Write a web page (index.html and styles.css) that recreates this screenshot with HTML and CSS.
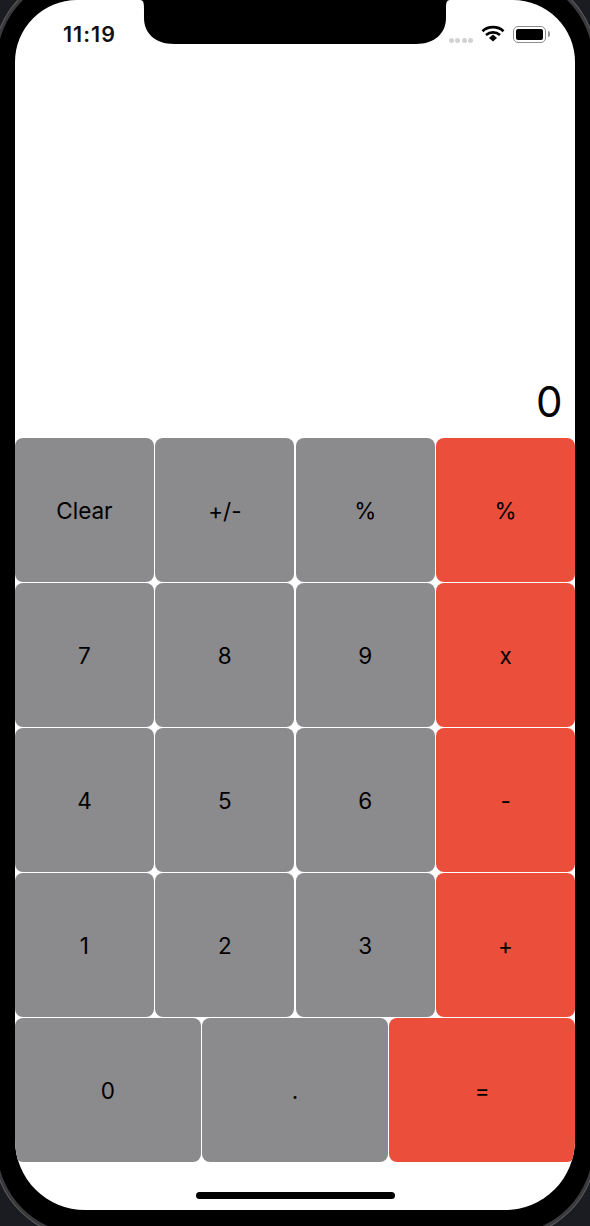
FILE: index.html
```html
<!DOCTYPE html>
<html lang="en">
<head>
<meta charset="utf-8">
<title>Calculator</title>
<link rel="stylesheet" href="styles.css">
</head>
<body>
<div class="device">
<main class="screen">
  <svg class="notch" width="310" height="45" viewBox="0 0 310 45"><path d="M0 0H310C306 0 306 4 306 10V18C306 33 295 44 276 44H34C15 44 4 33 4 18V10C4 4 4 0 0 0Z" fill="#000"/></svg>
  <header class="status">
    <span class="time">11:19</span>
    <div class="status-icons">
      <span class="signal"><i></i><i></i><i></i><i></i></span>
      <svg class="wifi" width="24" height="17" viewBox="0 0 24 17"><path d="M1.5 6.2C7 .8 17 .8 22.5 6.2" fill="none" stroke="#000" stroke-width="2.6"/><path d="M5 10C9 6.5 15 6.5 19 10" fill="none" stroke="#000" stroke-width="2.6"/><path d="M8 13L12 9.6 16 13 12 16.6Z" fill="#000"/></svg>
      <span class="battery"><span class="battery-fill"></span></span>
    </div>
  </header>
  <div class="display">0</div>
  <section class="keypad">
    <div class="row">
      <button class="key">Clear</button><button class="key">+/-</button><button class="key">%</button><button class="key op">%</button>
    </div>
    <div class="row">
      <button class="key">7</button><button class="key">8</button><button class="key">9</button><button class="key op">x</button>
    </div>
    <div class="row">
      <button class="key">4</button><button class="key">5</button><button class="key">6</button><button class="key op">-</button>
    </div>
    <div class="row">
      <button class="key">1</button><button class="key">2</button><button class="key">3</button><button class="key op">+</button>
    </div>
    <div class="row">
      <button class="key">0</button><button class="key">.</button><button class="key op">=</button>
    </div>
  </section>
  <div class="home-area"><span class="home-bar"></span></div>
</main>
</div>
</body>
</html>
```
FILE: styles.css
```css
* { box-sizing: border-box; }
html, body { margin: 0; height: 100%; }
body {
  width: 590px;
  height: 1226px;
  overflow: hidden;
  background: #1b1b22;
  font-family: Inter, "Liberation Sans", sans-serif;
}
.device {
  width: 602px;
  height: 1265px;
  margin: -28px -6px 0;
  padding: 25px 18px 16px;
  background: #000;
  border: 3px solid #3a3a3c;
  border-radius: 90px;
  box-shadow: 0 0 0 1px #5f5f62;
}
.screen {
  position: relative;
  display: flex;
  flex-direction: column;
  width: 560px;
  height: 1210px;
  overflow: hidden;
  background: #fff;
  border-radius: 62px 62px 70px 70px;
}
.notch { position: absolute; left: 125px; top: 0; }
.status {
  display: flex;
  justify-content: space-between;
  align-items: center;
  height: 68px;
  padding: 0 0 0 48px;
}
.time {
  font-size: 21.5px;
  font-weight: 600;
  color: #111;
  letter-spacing: 1px;
}
.status-icons { display: flex; align-items: center; }
.signal { display: flex; gap: 1.5px; margin-right: 8px; margin-top: 12px; }
.signal i { width: 5px; height: 5px; border-radius: 50%; background: #d2d2d2; }
.wifi { margin-right: 8px; margin-top: -1px; }
.battery {
  position: relative;
  display: block;
  width: 33px;
  height: 17px;
  margin-right: 29px;
  padding: 2px;
  border: 1.5px solid #8e8e8e;
  border-radius: 5px;
}
.battery::after {
  content: "";
  position: absolute;
  right: -5px;
  top: 4px;
  width: 2px;
  height: 6px;
  border-radius: 0 2px 2px 0;
  background: #999;
}
.battery-fill { display: block; height: 100%; background: #000; border-radius: 2px; }
.display {
  height: 370px;
  display: flex;
  align-items: flex-end;
  justify-content: flex-end;
  padding-right: 12.5px;
  padding-bottom: 11px;
  font-size: 42px;
  line-height: 50px;
  color: #000;
}
.keypad { display: flex; flex-direction: column; gap: 1.5px; }
.row { display: flex; gap: 1.5px; height: 143.5px; }
.key {
  flex: 1 1 0;
  min-width: 0;
  padding: 1px 0 0;
  border: 0;
  border-radius: 8px;
  background: #8b8a8c;
  color: #000;
  font-family: inherit;
  font-size: 22.5px;
}
.key.op { background: #ec4e3c; }
.home-area { flex: 1; display: flex; justify-content: center; padding-top: 30px; }
.home-bar { width: 199px; height: 7px; border-radius: 4px; background: #000; }
```
